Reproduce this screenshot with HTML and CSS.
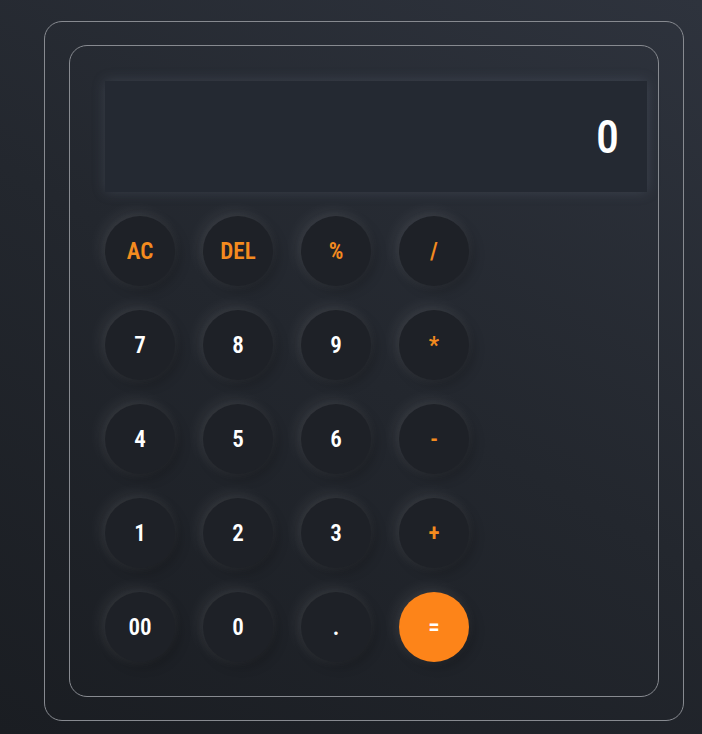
FILE: index.html
```html
<!DOCTYPE html>
<html>
<head>
<meta charset="utf-8">
<link rel="stylesheet" href="styles.css">
</head>
<body>
<div class="frame">
  <div class="calc">
    <div class="display">0</div>
    <div class="keys">
      <button class="key op">AC</button>
      <button class="key op">DEL</button>
      <button class="key op">%</button>
      <button class="key op">/</button>
      <button class="key">7</button>
      <button class="key">8</button>
      <button class="key">9</button>
      <button class="key op">*</button>
      <button class="key">4</button>
      <button class="key">5</button>
      <button class="key">6</button>
      <button class="key op">-</button>
      <button class="key">1</button>
      <button class="key">2</button>
      <button class="key">3</button>
      <button class="key op">+</button>
      <button class="key">00</button>
      <button class="key">0</button>
      <button class="key">.</button>
      <button class="key eq">=</button>
    </div>
  </div>
</div>
</body>
</html>
```
FILE: styles.css
```css
html, body {
  margin: 0;
  height: 100%;
}
body {
  background: linear-gradient(30deg, #1a1d22 0%, #23272e 50%, #2e333d 100%);
  font-family: "Roboto Condensed", "Liberation Sans Narrow", "Roboto", sans-serif;
  padding: 21px 0 0 44px;
  box-sizing: border-box;
  overflow: hidden;
}
.frame {
  width: 640px;
  height: 700px;
  box-sizing: border-box;
  border: 1px solid #878a90;
  border-radius: 18px;
  padding: 23px 24px;
}
.calc {
  width: 590px;
  height: 652px;
  box-sizing: border-box;
  border: 1px solid #878a90;
  border-radius: 18px;
  padding: 35px 11px 0 35px;
}
.display {
  height: 111px;
  background: #242932;
  box-shadow: 0 0 12px rgba(120, 130, 150, 0.25);
  color: #ffffff;
  font-weight: 500;
  font-size: 46px;
  display: flex;
  align-items: center;
  justify-content: flex-end;
  padding-right: 28px;
}
.keys {
  margin-top: 24px;
  display: grid;
  grid-template-columns: repeat(4, 70px);
  grid-auto-rows: 70px;
  column-gap: 28px;
  row-gap: 24px;
}
.key {
  width: 70px;
  height: 70px;
  border: none;
  border-radius: 50%;
  background: #1e2127;
  color: #ffffff;
  font-family: inherit;
  font-weight: 600;
  font-size: 23px;
  padding: 0;
  box-shadow: -4px -4px 16px rgba(255, 255, 255, 0.08), 0 0 14px rgba(255, 255, 255, 0.05), 4px 4px 12px rgba(0, 0, 0, 0.25);
}
.key.op {
  color: #f48b1f;
}
.key.eq {
  background: #fd8419;
  color: #ffffff;
}
```
